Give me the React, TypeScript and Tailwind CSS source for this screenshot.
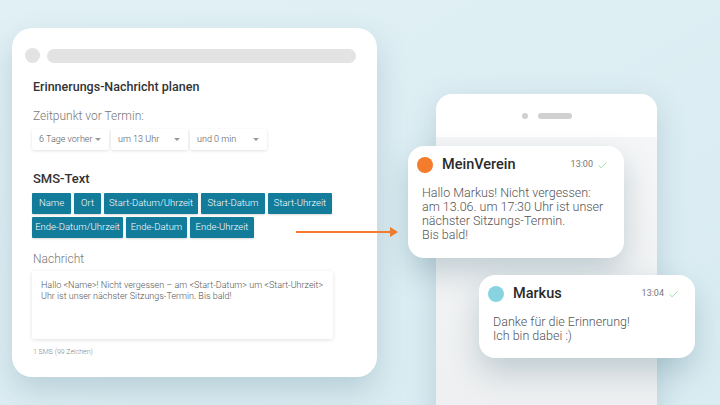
import { Check } from "lucide-react"

const placeholders = [
	[
		{ label: "Name", w: "w-[39px]" },
		{ label: "Ort", w: "w-[27px]" },
		{ label: "Start-Datum/Uhrzeit", w: "w-[94px]" },
		{ label: "Start-Datum", w: "w-[64px]" },
		{ label: "Start-Uhrzeit", w: "w-[64px]" },
	],
	[
		{ label: "Ende-Datum/Uhrzeit", w: "w-[91px]" },
		{ label: "Ende-Datum", w: "w-[61px]" },
		{ label: "Ende-Uhrzeit", w: "w-[64px]" },
	],
]

const selects = ["6 Tage vorher", "um 13 Uhr", "und 0 min"]

function Select({ label }: { label: string }) {
	return (
		<div className="w-[77px] h-[21px] flex items-center justify-between pl-[7px] pr-[8px] bg-white shadow-[0_1px_3px_rgba(0,0,0,0.12)] rounded-[2px] whitespace-nowrap">
			<span className="text-[9px] font-light text-[#555]">{label}</span>
			<span className="w-0 h-0 border-l-[3px] border-r-[3px] border-t-[3.5px] border-l-transparent border-r-transparent border-t-[#999]" />
		</div>
	)
}

function Bubble({ dot, name, time, lines, className }: { dot: string; name: string; time: string; lines: string[]; className: string }) {
	return (
		<div className={`absolute bg-white rounded-[16px] shadow-[0_14px_30px_rgba(70,110,125,0.28)] whitespace-nowrap ${className}`}>
			<div className="flex items-center h-[36px] pl-[9px] pr-[16px] mt-[1px]">
				<span className={`w-[16px] h-[16px] rounded-full ${dot}`} />
				<span className="ml-[9px] text-[14.5px] font-medium text-[#2a2a2a]">{name}</span>
				<span className="ml-auto text-[9px] text-[#777]">{time}</span>
				<Check className="ml-[4px] text-[#7ccf8a]" size={11} strokeWidth={1.6} />
			</div>
			<div className="pl-[14px] pt-[3px] text-[12.5px] leading-[14px] text-[#555] font-light">
				{lines.map((l) => (
					<div key={l}>{l}</div>
				))}
			</div>
		</div>
	)
}

export default function App() {
	return (
		<div className="relative w-[720px] h-[405px] overflow-hidden bg-gradient-to-br from-[#e1f0f5] to-[#d9ecf2] font-['Roboto',sans-serif]">
			<div className="flex items-start">
				{/* editor card */}
				<div className="ml-[12px] mt-[28px] w-[365px] h-[349px] bg-white rounded-[20px] shadow-[0_14px_30px_rgba(80,120,135,0.25)] pt-[20px]">
					<div className="flex items-center pl-[13px] gap-[7px]">
						<span className="w-[15px] h-[15px] rounded-full bg-[#e3e3e3]" />
						<span className="w-[309px] h-[14px] rounded-full bg-[#e3e3e3]" />
					</div>
					<div className="px-[21px]">
						<h1 className="mt-[16px] text-[12.5px] font-medium text-[#333] leading-[16px]">Erinnerungs-Nachricht planen</h1>
						<p className="mt-[14px] text-[12px] font-light text-[#777] leading-[14px]">Zeitpunkt vor Termin:</p>
						<div className="flex gap-[2px] mt-[6px] -ml-[1px]">
							{selects.map((s) => (
								<Select key={s} label={s} />
							))}
						</div>
						<h2 className="mt-[21px] text-[13px] font-medium text-[#333] leading-[16px]">SMS-Text</h2>
						<div className="mt-[6px] flex flex-col gap-[3px] -ml-[1px]">
							{placeholders.map((row, i) => (
								<div key={i} className="flex gap-[3px]">
									{row.map((p) => (
										<span key={p.label} className={`${p.w} h-[21px] flex items-center justify-center whitespace-nowrap bg-[#127c9a] text-white text-[9.5px] font-light rounded-[1px] shadow-[0_1px_2px_rgba(0,0,0,0.15)]`}>
											{p.label}
										</span>
									))}
								</div>
							))}
						</div>
						<p className="mt-[14px] text-[12px] font-light text-[#777] leading-[14px]">Nachricht</p>
						<div className="mt-[5px] w-[301px] h-[68px] -ml-[1px] bg-white rounded-[2px] shadow-[0_1px_4px_rgba(0,0,0,0.12)] px-[9px] pt-[9px] text-[9px] leading-[11px] text-[#555] font-light">
							Hallo &lt;Name&gt;! Nicht vergessen – am &lt;Start-Datum&gt; um &lt;Start-Uhrzeit&gt; Uhr ist unser nächster Sitzungs-Termin. Bis bald!
						</div>
						<p className="mt-[8px] text-[7px] text-[#888] font-light">1 SMS (99 Zeichen)</p>
					</div>
				</div>

				{/* phone */}
				<div className="ml-[59px] mt-[94px] w-[221px] h-[330px] rounded-t-[16px] bg-[#f3f4f5] shadow-[0_10px_30px_rgba(80,120,135,0.25)] overflow-hidden">
					<div className="h-[43px] bg-white flex items-center justify-center gap-[10px]">
						<span className="w-[6px] h-[6px] rounded-full bg-[#d0d0d0]" />
						<span className="w-[34px] h-[6px] rounded-full bg-[#d0d0d0]" />
					</div>
					<div className="h-full bg-gradient-to-b from-[#f5f6f7] to-[#eceeef]" />
				</div>
			</div>

			{/* arrow */}
			<div className="absolute left-[296px] top-[231px] w-[96px] h-[2px] bg-[#f47c2c]" />
			<div className="absolute left-[390px] top-[227px] w-0 h-0 border-t-[5px] border-b-[5px] border-l-[8px] border-t-transparent border-b-transparent border-l-[#f47c2c]" />

			<Bubble
				className="left-[408px] top-[146px] w-[216px] h-[112px]"
				dot="bg-[#f47c2c]"
				name="MeinVerein"
				time="13:00"
				lines={["Hallo Markus! Nicht vergessen:", "am 13.06. um 17:30 Uhr ist unser", "nächster Sitzungs-Termin.", "Bis bald!"]}
			/>
			<Bubble
				className="left-[479px] top-[275px] w-[216px] h-[83px]"
				dot="bg-[#88d3e0]"
				name="Markus"
				time="13:04"
				lines={["Danke für die Erinnerung!", "Ich bin dabei :)"]}
			/>
		</div>
	)
}
